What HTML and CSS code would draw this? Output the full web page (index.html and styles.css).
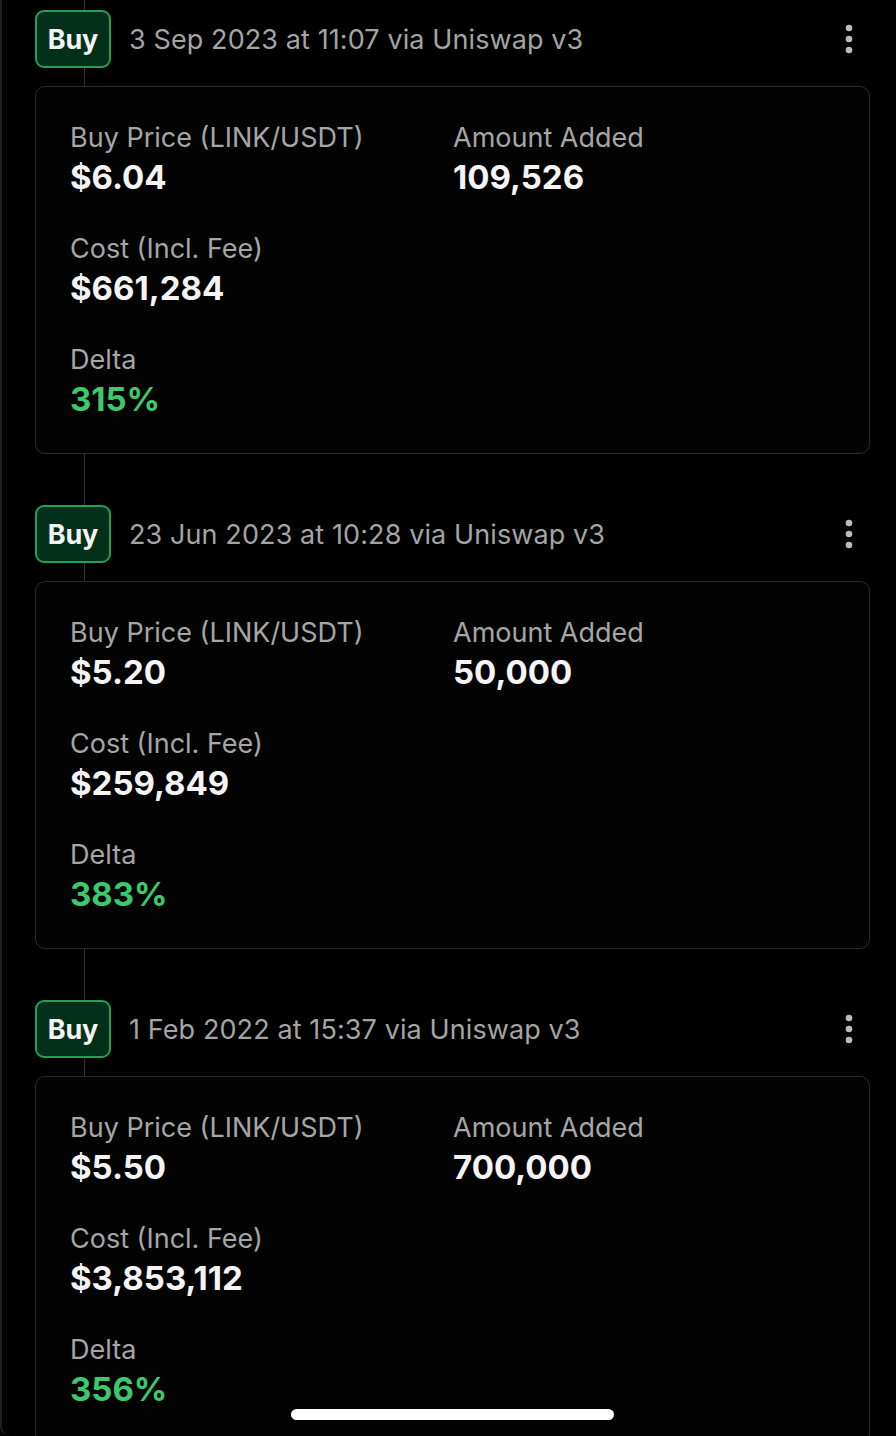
FILE: index.html
```html
<!DOCTYPE html>
<html lang="en">
<head>
<meta charset="utf-8">
<title>Trades</title>
<link rel="stylesheet" href="styles.css">
</head>
<body>
<div class="screen">
  <div class="feed">
    <section class="entry">
      <div class="entry-head">
        <span class="badge">Buy</span>
        <span class="when">3 Sep 2023 at 11:07 via Uniswap v3</span>
        <svg class="more" viewBox="0 0 8 30" width="8" height="30"><circle cx="4" cy="4" r="3.3"/><circle cx="4" cy="15" r="3.3"/><circle cx="4" cy="26" r="3.3"/></svg>
      </div>
      <div class="card">
        <div class="field"><div class="label">Buy Price (LINK/USDT)</div><div class="value">$6.04</div></div>
        <div class="field"><div class="label">Amount Added</div><div class="value">109,526</div></div>
        <div class="field"><div class="label">Cost (Incl. Fee)</div><div class="value">$661,284</div></div>
        <div class="field"></div>
        <div class="field"><div class="label">Delta</div><div class="value up">315%</div></div>
      </div>
    </section>
    <section class="entry">
      <div class="entry-head">
        <span class="badge">Buy</span>
        <span class="when">23 Jun 2023 at 10:28 via Uniswap v3</span>
        <svg class="more" viewBox="0 0 8 30" width="8" height="30"><circle cx="4" cy="4" r="3.3"/><circle cx="4" cy="15" r="3.3"/><circle cx="4" cy="26" r="3.3"/></svg>
      </div>
      <div class="card">
        <div class="field"><div class="label">Buy Price (LINK/USDT)</div><div class="value">$5.20</div></div>
        <div class="field"><div class="label">Amount Added</div><div class="value">50,000</div></div>
        <div class="field"><div class="label">Cost (Incl. Fee)</div><div class="value">$259,849</div></div>
        <div class="field"></div>
        <div class="field"><div class="label">Delta</div><div class="value up">383%</div></div>
      </div>
    </section>
    <section class="entry">
      <div class="entry-head">
        <span class="badge">Buy</span>
        <span class="when">1 Feb 2022 at 15:37 via Uniswap v3</span>
        <svg class="more" viewBox="0 0 8 30" width="8" height="30"><circle cx="4" cy="4" r="3.3"/><circle cx="4" cy="15" r="3.3"/><circle cx="4" cy="26" r="3.3"/></svg>
      </div>
      <div class="card">
        <div class="field"><div class="label">Buy Price (LINK/USDT)</div><div class="value">$5.50</div></div>
        <div class="field"><div class="label">Amount Added</div><div class="value">700,000</div></div>
        <div class="field"><div class="label">Cost (Incl. Fee)</div><div class="value">$3,853,112</div></div>
        <div class="field"></div>
        <div class="field"><div class="label">Delta</div><div class="value up">356%</div></div>
      </div>
    </section>
  </div>
  <div class="home-indicator"></div>
</div>
</body>
</html>
```

FILE: styles.css
```css
html, body {
  margin: 0;
  padding: 0;
  background: #000;
}

body {
  font-family: Inter, "Noto Sans", "Liberation Sans", sans-serif;
  color: #f2f2f2;
}

.screen {
  position: relative;
  width: 896px;
  height: 1436px;
  overflow: hidden;
  box-sizing: border-box;
  border-left: 2px solid #202020;
  border-bottom-left-radius: 10px;
  background: #000;
}

.feed {
  padding: 10px 26px 0 33px;
  background: linear-gradient(#333, #333) no-repeat 82px 0 / 1px 100%;
  display: flex;
  flex-direction: column;
  gap: 51px;
}

.entry {
  display: flex;
  flex-direction: column;
  gap: 18px;
}

.entry-head {
  display: flex;
  align-items: center;
  height: 58px;
}

.badge {
  box-sizing: border-box;
  width: 76px;
  height: 58px;
  display: flex;
  align-items: center;
  justify-content: center;
  border: 2px solid #22a056;
  border-radius: 9px;
  background: #03301a;
  color: #f4f4f4;
  font-weight: 700;
  font-size: 27px;
  letter-spacing: -0.2px;
}

.when {
  margin-left: 18px;
  flex: 1;
  color: #a4a4a4;
  font-size: 27px;
  letter-spacing: 0.1px;
}

.more {
  fill: #bcbcbc;
  margin-right: 17px;
}

.card {
  box-sizing: border-box;
  height: 368px;
  border: 1px solid #2b2b2b;
  border-radius: 10px;
  background: #030303;
  padding: 35px 20px 34px 34px;
  display: grid;
  grid-template-columns: 383px 1fr;
  row-gap: 38px;
  align-content: start;
}

.field {
  display: flex;
  flex-direction: column;
  gap: 5px;
}

.label {
  color: #a6a6a6;
  font-size: 27px;
  line-height: 32px;
}

.value {
  font-size: 33px;
  line-height: 36px;
  font-weight: 700;
  color: #f4f4f4;
}

.value.up {
  color: #3cc96b;
}

.home-indicator {
  position: absolute;
  left: 289px;
  top: 1409px;
  width: 323px;
  height: 11px;
  border-radius: 6px;
  background: #fff;
}
```
